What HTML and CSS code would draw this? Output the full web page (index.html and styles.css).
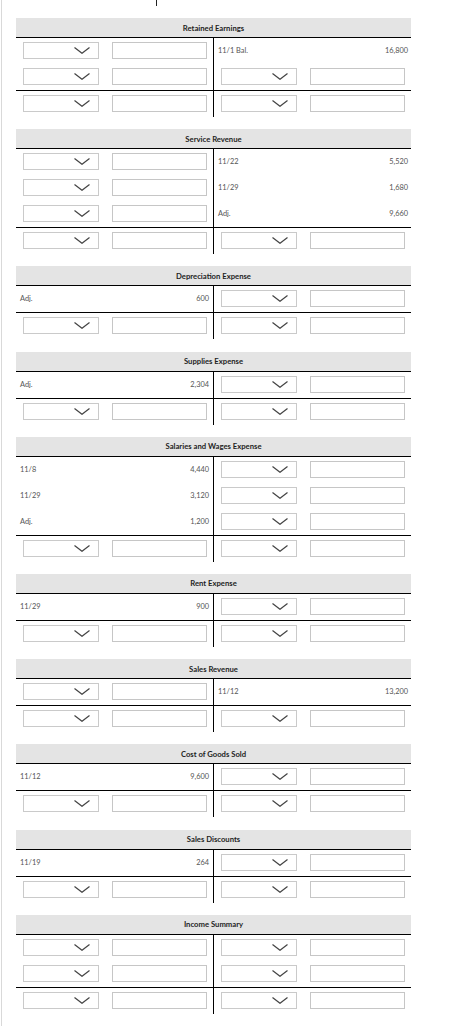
FILE: index.html
```html
<!DOCTYPE html>
<html lang="en">
<head>
<meta charset="utf-8">
<title>T-Accounts</title>
<link rel="stylesheet" href="styles.css">
</head>
<body>
<div class="page">
  <div class="top-stub"></div>

  <!-- Retained Earnings -->
  <section class="taccount">
    <div class="ta-head">Retained Earnings</div>
    <div class="ta-group">
      <div class="ta-row">
        <div class="side side-left entry"><div class="dd"><svg viewBox="0 0 16 7"><polyline points="0.5,0.5 8,6.3 15.5,0.5"/></svg></div><input class="amt" type="text"></div>
        <div class="side text"><span>11/1 Bal.</span><span>16,800</span></div>
      </div>
      <div class="ta-row">
        <div class="side side-left entry"><div class="dd"><svg viewBox="0 0 16 7"><polyline points="0.5,0.5 8,6.3 15.5,0.5"/></svg></div><input class="amt" type="text"></div>
        <div class="side entry"><div class="dd"><svg viewBox="0 0 16 7"><polyline points="0.5,0.5 8,6.3 15.5,0.5"/></svg></div><input class="amt" type="text"></div>
      </div>
    </div>
    <div class="ta-row">
      <div class="side side-left entry"><div class="dd"><svg viewBox="0 0 16 7"><polyline points="0.5,0.5 8,6.3 15.5,0.5"/></svg></div><input class="amt" type="text"></div>
      <div class="side entry"><div class="dd"><svg viewBox="0 0 16 7"><polyline points="0.5,0.5 8,6.3 15.5,0.5"/></svg></div><input class="amt" type="text"></div>
    </div>
  </section>

  <!-- Service Revenue -->
  <section class="taccount">
    <div class="ta-head">Service Revenue</div>
    <div class="ta-group">
      <div class="ta-row">
        <div class="side side-left entry"><div class="dd"><svg viewBox="0 0 16 7"><polyline points="0.5,0.5 8,6.3 15.5,0.5"/></svg></div><input class="amt" type="text"></div>
        <div class="side text"><span>11/22</span><span>5,520</span></div>
      </div>
      <div class="ta-row">
        <div class="side side-left entry"><div class="dd"><svg viewBox="0 0 16 7"><polyline points="0.5,0.5 8,6.3 15.5,0.5"/></svg></div><input class="amt" type="text"></div>
        <div class="side text"><span>11/29</span><span>1,680</span></div>
      </div>
      <div class="ta-row">
        <div class="side side-left entry"><div class="dd"><svg viewBox="0 0 16 7"><polyline points="0.5,0.5 8,6.3 15.5,0.5"/></svg></div><input class="amt" type="text"></div>
        <div class="side text"><span>Adj.</span><span>9,660</span></div>
      </div>
    </div>
    <div class="ta-row">
      <div class="side side-left entry"><div class="dd"><svg viewBox="0 0 16 7"><polyline points="0.5,0.5 8,6.3 15.5,0.5"/></svg></div><input class="amt" type="text"></div>
      <div class="side entry"><div class="dd"><svg viewBox="0 0 16 7"><polyline points="0.5,0.5 8,6.3 15.5,0.5"/></svg></div><input class="amt" type="text"></div>
    </div>
  </section>

  <!-- Depreciation Expense -->
  <section class="taccount">
    <div class="ta-head">Depreciation Expense</div>
    <div class="ta-group">
      <div class="ta-row">
        <div class="side side-left text"><span>Adj.</span><span>600</span></div>
        <div class="side entry"><div class="dd"><svg viewBox="0 0 16 7"><polyline points="0.5,0.5 8,6.3 15.5,0.5"/></svg></div><input class="amt" type="text"></div>
      </div>
    </div>
    <div class="ta-row">
      <div class="side side-left entry"><div class="dd"><svg viewBox="0 0 16 7"><polyline points="0.5,0.5 8,6.3 15.5,0.5"/></svg></div><input class="amt" type="text"></div>
      <div class="side entry"><div class="dd"><svg viewBox="0 0 16 7"><polyline points="0.5,0.5 8,6.3 15.5,0.5"/></svg></div><input class="amt" type="text"></div>
    </div>
  </section>

  <!-- Supplies Expense -->
  <section class="taccount">
    <div class="ta-head">Supplies Expense</div>
    <div class="ta-group">
      <div class="ta-row">
        <div class="side side-left text"><span>Adj.</span><span>2,304</span></div>
        <div class="side entry"><div class="dd"><svg viewBox="0 0 16 7"><polyline points="0.5,0.5 8,6.3 15.5,0.5"/></svg></div><input class="amt" type="text"></div>
      </div>
    </div>
    <div class="ta-row">
      <div class="side side-left entry"><div class="dd"><svg viewBox="0 0 16 7"><polyline points="0.5,0.5 8,6.3 15.5,0.5"/></svg></div><input class="amt" type="text"></div>
      <div class="side entry"><div class="dd"><svg viewBox="0 0 16 7"><polyline points="0.5,0.5 8,6.3 15.5,0.5"/></svg></div><input class="amt" type="text"></div>
    </div>
  </section>

  <!-- Salaries and Wages Expense -->
  <section class="taccount">
    <div class="ta-head">Salaries and Wages Expense</div>
    <div class="ta-group">
      <div class="ta-row">
        <div class="side side-left text"><span>11/8</span><span>4,440</span></div>
        <div class="side entry"><div class="dd"><svg viewBox="0 0 16 7"><polyline points="0.5,0.5 8,6.3 15.5,0.5"/></svg></div><input class="amt" type="text"></div>
      </div>
      <div class="ta-row">
        <div class="side side-left text"><span>11/29</span><span>3,120</span></div>
        <div class="side entry"><div class="dd"><svg viewBox="0 0 16 7"><polyline points="0.5,0.5 8,6.3 15.5,0.5"/></svg></div><input class="amt" type="text"></div>
      </div>
      <div class="ta-row">
        <div class="side side-left text"><span>Adj.</span><span>1,200</span></div>
        <div class="side entry"><div class="dd"><svg viewBox="0 0 16 7"><polyline points="0.5,0.5 8,6.3 15.5,0.5"/></svg></div><input class="amt" type="text"></div>
      </div>
    </div>
    <div class="ta-row">
      <div class="side side-left entry"><div class="dd"><svg viewBox="0 0 16 7"><polyline points="0.5,0.5 8,6.3 15.5,0.5"/></svg></div><input class="amt" type="text"></div>
      <div class="side entry"><div class="dd"><svg viewBox="0 0 16 7"><polyline points="0.5,0.5 8,6.3 15.5,0.5"/></svg></div><input class="amt" type="text"></div>
    </div>
  </section>

  <!-- Rent Expense -->
  <section class="taccount">
    <div class="ta-head">Rent Expense</div>
    <div class="ta-group">
      <div class="ta-row">
        <div class="side side-left text"><span>11/29</span><span>900</span></div>
        <div class="side entry"><div class="dd"><svg viewBox="0 0 16 7"><polyline points="0.5,0.5 8,6.3 15.5,0.5"/></svg></div><input class="amt" type="text"></div>
      </div>
    </div>
    <div class="ta-row">
      <div class="side side-left entry"><div class="dd"><svg viewBox="0 0 16 7"><polyline points="0.5,0.5 8,6.3 15.5,0.5"/></svg></div><input class="amt" type="text"></div>
      <div class="side entry"><div class="dd"><svg viewBox="0 0 16 7"><polyline points="0.5,0.5 8,6.3 15.5,0.5"/></svg></div><input class="amt" type="text"></div>
    </div>
  </section>

  <!-- Sales Revenue -->
  <section class="taccount">
    <div class="ta-head">Sales Revenue</div>
    <div class="ta-group">
      <div class="ta-row">
        <div class="side side-left entry"><div class="dd"><svg viewBox="0 0 16 7"><polyline points="0.5,0.5 8,6.3 15.5,0.5"/></svg></div><input class="amt" type="text"></div>
        <div class="side text"><span>11/12</span><span>13,200</span></div>
      </div>
    </div>
    <div class="ta-row">
      <div class="side side-left entry"><div class="dd"><svg viewBox="0 0 16 7"><polyline points="0.5,0.5 8,6.3 15.5,0.5"/></svg></div><input class="amt" type="text"></div>
      <div class="side entry"><div class="dd"><svg viewBox="0 0 16 7"><polyline points="0.5,0.5 8,6.3 15.5,0.5"/></svg></div><input class="amt" type="text"></div>
    </div>
  </section>

  <!-- Cost of Goods Sold -->
  <section class="taccount">
    <div class="ta-head">Cost of Goods Sold</div>
    <div class="ta-group">
      <div class="ta-row">
        <div class="side side-left text"><span>11/12</span><span>9,600</span></div>
        <div class="side entry"><div class="dd"><svg viewBox="0 0 16 7"><polyline points="0.5,0.5 8,6.3 15.5,0.5"/></svg></div><input class="amt" type="text"></div>
      </div>
    </div>
    <div class="ta-row">
      <div class="side side-left entry"><div class="dd"><svg viewBox="0 0 16 7"><polyline points="0.5,0.5 8,6.3 15.5,0.5"/></svg></div><input class="amt" type="text"></div>
      <div class="side entry"><div class="dd"><svg viewBox="0 0 16 7"><polyline points="0.5,0.5 8,6.3 15.5,0.5"/></svg></div><input class="amt" type="text"></div>
    </div>
  </section>

  <!-- Sales Discounts -->
  <section class="taccount">
    <div class="ta-head">Sales Discounts</div>
    <div class="ta-group">
      <div class="ta-row">
        <div class="side side-left text"><span>11/19</span><span>264</span></div>
        <div class="side entry"><div class="dd"><svg viewBox="0 0 16 7"><polyline points="0.5,0.5 8,6.3 15.5,0.5"/></svg></div><input class="amt" type="text"></div>
      </div>
    </div>
    <div class="ta-row">
      <div class="side side-left entry"><div class="dd"><svg viewBox="0 0 16 7"><polyline points="0.5,0.5 8,6.3 15.5,0.5"/></svg></div><input class="amt" type="text"></div>
      <div class="side entry"><div class="dd"><svg viewBox="0 0 16 7"><polyline points="0.5,0.5 8,6.3 15.5,0.5"/></svg></div><input class="amt" type="text"></div>
    </div>
  </section>

  <!-- Income Summary -->
  <section class="taccount">
    <div class="ta-head">Income Summary</div>
    <div class="ta-group">
      <div class="ta-row">
        <div class="side side-left entry"><div class="dd"><svg viewBox="0 0 16 7"><polyline points="0.5,0.5 8,6.3 15.5,0.5"/></svg></div><input class="amt" type="text"></div>
        <div class="side entry"><div class="dd"><svg viewBox="0 0 16 7"><polyline points="0.5,0.5 8,6.3 15.5,0.5"/></svg></div><input class="amt" type="text"></div>
      </div>
      <div class="ta-row">
        <div class="side side-left entry"><div class="dd"><svg viewBox="0 0 16 7"><polyline points="0.5,0.5 8,6.3 15.5,0.5"/></svg></div><input class="amt" type="text"></div>
        <div class="side entry"><div class="dd"><svg viewBox="0 0 16 7"><polyline points="0.5,0.5 8,6.3 15.5,0.5"/></svg></div><input class="amt" type="text"></div>
      </div>
    </div>
    <div class="ta-row">
      <div class="side side-left entry"><div class="dd"><svg viewBox="0 0 16 7"><polyline points="0.5,0.5 8,6.3 15.5,0.5"/></svg></div><input class="amt" type="text"></div>
      <div class="side entry"><div class="dd"><svg viewBox="0 0 16 7"><polyline points="0.5,0.5 8,6.3 15.5,0.5"/></svg></div><input class="amt" type="text"></div>
    </div>
  </section>
</div>
</body>
</html>
```

FILE: styles.css
```css
html, body {
  margin: 0;
  padding: 0;
  background: #fff;
}

body {
  font-family: Lato, "Open Sans", "Liberation Sans", sans-serif;
  color: #333;
}

.page {
  margin-left: 1px;
  border-left: 1px solid #d9d9d9;
  padding: 0 0 8px 14px;
  min-height: 1015px;
}

.top-stub {
  width: 0;
  height: 6px;
  margin-left: 140px;
  border-left: 1px solid #222;
  margin-bottom: 12px;
}

.taccount {
  width: 395px;
  margin-bottom: 12.2px;
}

.ta-head {
  height: 19px;
  background: #e4e4e4;
  border-bottom: 1px solid #000;
  display: flex;
  align-items: center;
  justify-content: center;
  font-size: 7.7px;
  font-weight: 700;
  color: #1e1e1e;
}

.ta-group {
  border-bottom: 1px solid #000;
}

.ta-row {
  display: flex;
  height: 26px;
}

.side {
  width: 197px;
  box-sizing: border-box;
  display: flex;
  align-items: center;
}

.side-left {
  width: 198px;
  border-right: 1px solid #000;
}

.entry {
  padding: 0 0 1px 7px;
  gap: 13px;
}

.text {
  justify-content: space-between;
  padding: 0 3px 1px 4px;
  font-size: 7.4px;
  color: #555;
}

.side-left.text {
  padding-right: 4px;
}

.dd {
  width: 76px;
  height: 17px;
  box-sizing: border-box;
  border: 1px solid #cacaca;
  background: #fff;
  display: flex;
  align-items: center;
  justify-content: flex-end;
  padding-right: 8px;
}

.dd svg {
  width: 16px;
  height: 7px;
  display: block;
}

.dd polyline {
  fill: none;
  stroke: #444;
  stroke-width: 1.2;
}

.amt {
  width: 95px;
  height: 17px;
  box-sizing: border-box;
  border: 1px solid #c6c6c6;
  margin: 0;
  padding: 0 3px;
  background: #fff;
  font: inherit;
  font-size: 7px;
  outline: none;
}
```
